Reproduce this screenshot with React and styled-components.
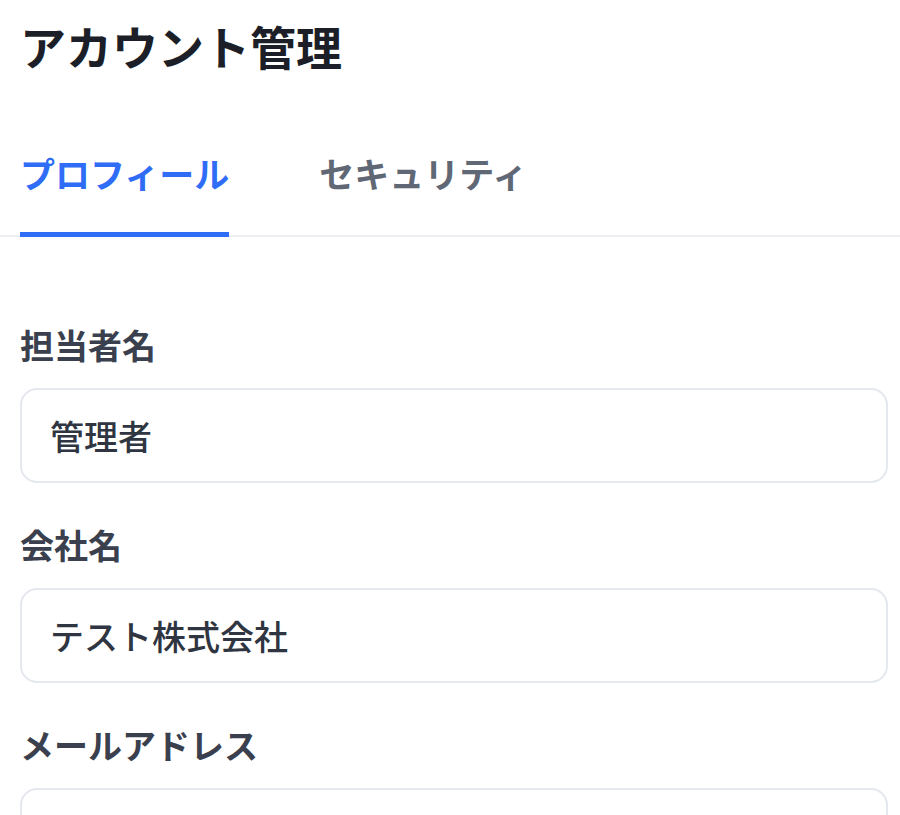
import React from "react";
import styled, { createGlobalStyle } from "styled-components";

const GlobalStyle = createGlobalStyle`
  html, body {
    margin: 0;
    padding: 0;
    background: #ffffff;
  }
  body {
    font-family: "Noto Sans CJK JP", "Noto Sans", sans-serif;
    -webkit-font-smoothing: antialiased;
  }
  * { box-sizing: border-box; }
`;

const Page = styled.div`
  width: 900px;
  height: 815px;
  overflow: hidden;
  background: #ffffff;
  padding-top: 15px;
`;

const Title = styled.h1`
  margin: 0;
  padding: 0 20px;
  font-size: 46px;
  line-height: 60px;
  font-weight: 700;
  color: #1c1f27;
`;

const TabBar = styled.nav`
  display: flex;
  gap: 90px;
  margin-top: 80px;
  padding: 0 20px;
  border-bottom: 2px solid #eceef2;
`;

const Tab = styled.button`
  appearance: none;
  background: none;
  border: none;
  border-bottom: 5px solid ${(p) => (p.$active ? "#2f6df6" : "transparent")};
  margin: 0 0 -2px 0;
  padding: 0 0 42px 0;
  font-family: inherit;
  font-size: 35px;
  line-height: 35px;
  font-weight: 700;
  color: ${(p) => (p.$active ? "#2f6df6" : "#606775")};
  cursor: pointer;
`;

const Form = styled.form`
  display: flex;
  flex-direction: column;
  gap: 38px;
  padding: 84px 12px 0 20px;
`;

const Field = styled.div`
  display: flex;
  flex-direction: column;
  gap: 19px;
`;

const Label = styled.label`
  font-size: 34px;
  line-height: 48px;
  font-weight: 700;
  color: #3a404d;
`;

const TextInput = styled.input`
  width: 100%;
  height: 95px;
  padding: 0 28px;
  border: 2px solid #e5e8ee;
  border-radius: 17px;
  background: #ffffff;
  font-family: inherit;
  font-size: 34px;
  font-weight: 500;
  color: #2f3541;
  outline: none;
`;

const fields = [
  { id: "name", label: "担当者名", value: "管理者" },
  { id: "company", label: "会社名", value: "テスト株式会社" },
  { id: "email", label: "メールアドレス", value: "admin@example.com" },
];

export default function App() {
  return (
    <>
      <GlobalStyle />
      <Page>
        <Title>アカウント管理</Title>
        <TabBar>
          <Tab type="button" $active>プロフィール</Tab>
          <Tab type="button">セキュリティ</Tab>
        </TabBar>
        <Form onSubmit={(e) => e.preventDefault()}>
          {fields.map((f) => (
            <Field key={f.id}>
              <Label htmlFor={f.id}>{f.label}</Label>
              <TextInput id={f.id} defaultValue={f.value} readOnly />
            </Field>
          ))}
        </Form>
      </Page>
    </>
  );
}
